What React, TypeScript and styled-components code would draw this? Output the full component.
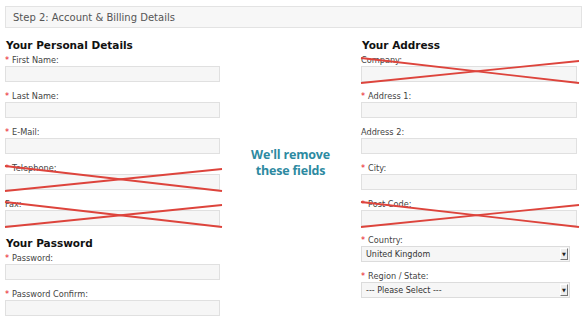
import React from 'react'
import styled, { createGlobalStyle } from 'styled-components'

const Global = createGlobalStyle`
  body {
    margin: 0;
    background: #fff;
    font-family: "DejaVu Sans", Verdana, sans-serif;
  }
`

const Page = styled.div`
  width: 588px;
  height: 320px;
  overflow: hidden;
  padding: 6px 6px 0 5px;
  box-sizing: border-box;
`

const StepBar = styled.div`
  height: 22px;
  box-sizing: border-box;
  border: 1px solid #e3e3e3;
  background: #f7f7f7;
  color: #555;
  font-size: 10px;
  display: flex;
  align-items: center;
  padding-left: 7px;
  margin-bottom: 9px;
`

const Columns = styled.div`
  display: grid;
  grid-template-columns: 215px 1fr 216px;
  margin-right: 5px;
`

const Column = styled.div`
  display: flex;
  flex-direction: column;
`

const Heading = styled.h2`
  margin: 0 0 2px 1px;
  height: 16px;
  line-height: 16px;
  font-size: 10.5px;
  font-weight: bold;
  color: #111;
`

const Field = styled.div`
  position: relative;
  display: flex;
  flex-direction: column;
  margin-bottom: 9px;
`

const Label = styled.label`
  height: 11px;
  line-height: 10px;
  font-size: 8.2px;
  color: #444;
  white-space: nowrap;
`

const Star = styled.span`
  color: #e8141b;
  margin-right: 3px;
`

const Input = styled.div`
  height: 16px;
  box-sizing: border-box;
  border: 1px solid #e0e0e0;
  background: #f6f6f6;
`

const Select = styled.div<{ $w: number }>`
  width: ${(p) => p.$w}px;
  height: 16px;
  box-sizing: border-box;
  border: 1px solid #dcdcdc;
  background: #f6f6f6;
  display: flex;
  align-items: center;
  justify-content: space-between;
  padding: 0 1px 0 4px;
  font-size: 8px;
  color: #333;
`

const Arrow = styled.span`
  width: 8px;
  height: 12px;
  box-sizing: border-box;
  border-right: 1px solid #777;
  border-bottom: 1px solid #777;
  border-top: 1px solid #fff;
  border-left: 1px solid #fff;
  background: #eee;
  font-size: 5px;
  line-height: 10px;
  text-align: center;
  color: #222;
`

const Cross = styled.svg`
  position: absolute;
  left: 0;
  top: 3px;
  overflow: visible;
  pointer-events: none;
`

const Note = styled.div`
  padding-top: 110px;
  text-align: center;
  font-family: "Open Sans", sans-serif;
  font-weight: bold;
  font-size: 12.5px;
  line-height: 16px;
  color: #2d8aa1;
  letter-spacing: -0.2px;
`

const NoteLine = styled.div`
  white-space: nowrap;
`

type FieldProps = { label: string; required?: boolean; crossed?: boolean; width: number }

const TextField = ({ label, required, crossed, width }: FieldProps) => (
  <Field>
    <Label>
      {required && <Star>*</Star>}
      {label}
    </Label>
    <Input />
    {crossed && (
      <Cross width={width + 2} height={26}>
        <line x1={0} y1={0} x2={width + 2} y2={25} stroke="#dd443c" strokeWidth={1.8} />
        <line x1={0} y1={25} x2={width + 2} y2={3} stroke="#dd443c" strokeWidth={1.8} />
      </Cross>
    )}
  </Field>
)

const SelectField = ({ label, value }: { label: string; value: string }) => (
  <Field>
    <Label>
      <Star>*</Star>
      {label}
    </Label>
    <Select $w={209}>
      <span>{value}</span>
      <Arrow>▼</Arrow>
    </Select>
  </Field>
)

export default function App() {
  return (
    <>
      <Global />
      <Page>
        <StepBar>Step 2: Account &amp; Billing Details</StepBar>
        <Columns>
          <Column>
            <Heading>Your Personal Details</Heading>
            <TextField width={215} required label="First Name:" />
            <TextField width={215} required label="Last Name:" />
            <TextField width={215} required label="E-Mail:" />
            <TextField width={215} required crossed label="Telephone:" />
            <TextField width={215} crossed label="Fax:" />
            <Heading>Your Password</Heading>
            <TextField width={215} required label="Password:" />
            <TextField width={215} required label="Password Confirm:" />
          </Column>
          <Note>
            <NoteLine>We'll remove</NoteLine>
            <NoteLine>these fields</NoteLine>
          </Note>
          <Column>
            <Heading>Your Address</Heading>
            <TextField width={216} crossed label="Company:" />
            <TextField width={216} required label="Address 1:" />
            <TextField width={216} label="Address 2:" />
            <TextField width={216} required label="City:" />
            <TextField width={216} required crossed label="Post Code:" />
            <SelectField label="Country:" value="United Kingdom" />
            <SelectField label="Region / State:" value="--- Please Select ---" />
          </Column>
        </Columns>
      </Page>
    </>
  )
}
